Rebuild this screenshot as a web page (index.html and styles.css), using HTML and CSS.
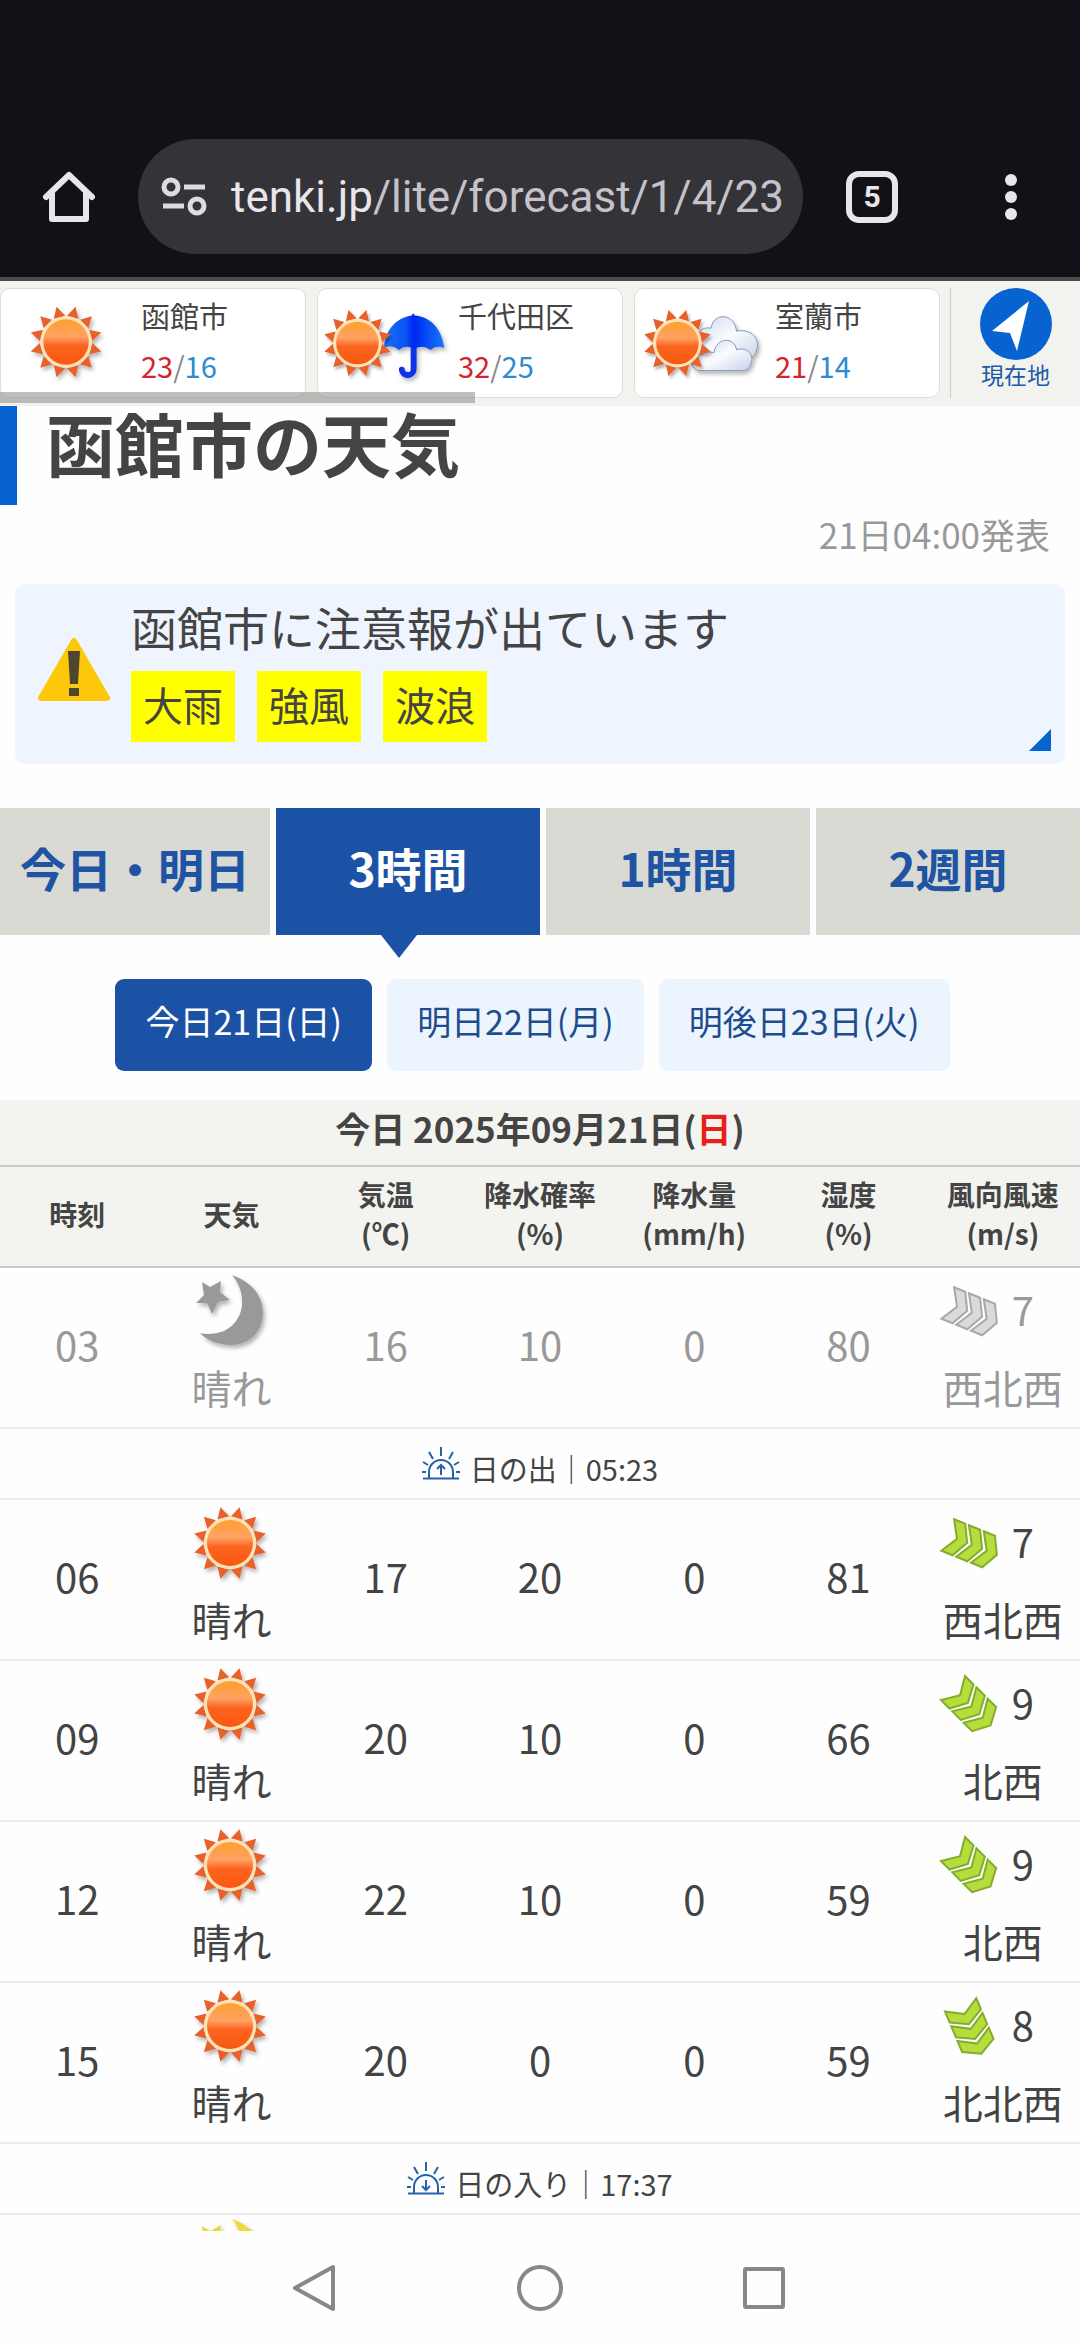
FILE: index.html
```html
<!DOCTYPE html>
<html lang="ja">
<head>
<meta charset="utf-8">
<meta name="viewport" content="width=device-width, initial-scale=1">
<title>函館市の天気</title>
<link rel="stylesheet" href="styles.css">
</head>
<body>
<!-- Shared icon shapes -->
<svg class="defs" width="0" height="0" aria-hidden="true">
  <defs>
    <linearGradient id="sun-fill" x1="0" y1="0" x2="0" y2="1">
      <stop offset="0" stop-color="#ff9f2e"/><stop offset=".38" stop-color="#ffa263"/>
      <stop offset=".58" stop-color="#fb6420"/><stop offset="1" stop-color="#fb5710"/>
    </linearGradient>
    <linearGradient id="umbrella-fill" x1="0" y1="0" x2="1" y2="0">
      <stop offset="0" stop-color="#1d6df5"/><stop offset=".35" stop-color="#0a55f5"/><stop offset=".5" stop-color="#0326f0"/>
      <stop offset=".68" stop-color="#0648f5"/><stop offset="1" stop-color="#1a76f5"/>
    </linearGradient>
    <linearGradient id="cloud-fill" x1="0" y1="0" x2="1" y2="1">
      <stop offset="0" stop-color="#c9d7ee"/><stop offset=".5" stop-color="#fafcff"/><stop offset="1" stop-color="#c5d2ea"/>
    </linearGradient>
    <filter id="soft-shadow" x="-20%" y="-20%" width="150%" height="150%">
      <feDropShadow dx="2" dy="3" stdDeviation="2" flood-color="#000" flood-opacity=".3"/>
    </filter>
    <path id="ray" d="M-6 -26 L0 -37 L6 -26Z"/>
    <g id="sun" filter="url(#soft-shadow)">
      <g fill="#e8602c">
        <use href="#ray" transform="rotate(15)"/><use href="#ray" transform="rotate(45)"/>
        <use href="#ray" transform="rotate(75)"/><use href="#ray" transform="rotate(105)"/>
        <use href="#ray" transform="rotate(135)"/><use href="#ray" transform="rotate(165)"/>
        <use href="#ray" transform="rotate(195)"/><use href="#ray" transform="rotate(225)"/>
        <use href="#ray" transform="rotate(255)"/><use href="#ray" transform="rotate(285)"/>
        <use href="#ray" transform="rotate(315)"/><use href="#ray" transform="rotate(345)"/>
      </g>
      <circle r="26" fill="#fde3b4"/>
      <circle r="23" fill="url(#sun-fill)"/>
    </g>
    <g id="moon" filter="url(#soft-shadow)">
      <path d="M39 4 C59 11 70 25 70 42 C70 60 57 74 38 74 C25 74 13 69 7 62 C14 64 23 63 31 60 C44 54 50 41 49 29 C49 20 45 11 39 4Z"/>
      <path d="M9 11 L17 16 L28 10 L27 21 L37 29 L25 31 L19 43 L14 32 L3 32 L11 24Z"/>
    </g>
    <path id="chevron" d="M-24 -17 H-12 L-3 0 L-12 17 H-24 L-14 0Z"/>
    <g id="wind">
      <use href="#chevron"/><use href="#chevron" x="16"/><use href="#chevron" x="32"/>
    </g>
    <g id="horizon">
      <path d="M1 31.500H37M7 31V25a12 12 0 0 1 24 0V31M19 0V9M7 5L11 12M31 5L27 12M1 15L6 18M37 15L32 18M0 25H4M38 25H34"/>
    </g>
  </defs>
</svg>

<div class="screen">
  <header class="browser-bar">
    <button class="bar-button" type="button" aria-label="ホーム">
      <svg width="54" height="56" viewBox="0 0 54 56" fill="none" stroke="#e8e5ec" stroke-width="6" stroke-linecap="round" stroke-linejoin="round"><path d="M4 28L27 6L50 28M10 24V50H44V24"/></svg>
    </button>
    <button class="address" type="button">
      <svg width="44" height="38" viewBox="0 0 44 38" fill="none" stroke="#dedbe2" stroke-width="5"><circle cx="9" cy="9" r="7"/><path d="M22 9H43M1 28H22"/><circle cx="35" cy="28" r="7"/></svg>
      <span class="url">tenki.jp<span class="url-path">/lite/forecast/1/4/23</span></span>
    </button>
    <button class="bar-button" type="button" aria-label="タブ"><span class="tab-count">5</span></button>
    <button class="bar-button" type="button" aria-label="メニュー">
      <svg width="12" height="46" viewBox="0 0 12 46" fill="#e8e5ec"><circle cx="6" cy="6" r="6"/><circle cx="6" cy="23" r="6"/><circle cx="6" cy="40" r="6"/></svg>
    </button>
  </header>

  <main class="page">
    <nav class="places">
      <div class="place-list">
        <a class="place" href="#">
          <svg class="place-icon" viewBox="0 0 142 84"><use href="#sun" x="66" y="41"/></svg>
          <span class="place-text"><span>函館市</span><span class="temps"><span class="high">23</span>/<span class="low">16</span></span></span>
        </a>
        <a class="place" href="#">
          <svg class="place-icon" viewBox="0 0 142 84">
            <g filter="url(#soft-shadow)">
              <path d="M97 42V68a6 6 0 0 1-12 1" fill="none" stroke="#0a30e8" stroke-width="6" stroke-linecap="round"/>
              <path d="M95 14q2-4 3 0C114 15 126 28 128 47Q120 44 114 49Q106 43 98 48Q89 43 82 49Q75 43 67 47C68 28 80 16 95 14Z" fill="url(#umbrella-fill)"/>
            </g>
            <use href="#sun" transform="translate(40 42) scale(.94)"/>
          </svg>
          <span class="place-text"><span>千代田区</span><span class="temps"><span class="high">32</span>/<span class="low">25</span></span></span>
        </a>
        <a class="place" href="#">
          <svg class="place-icon" viewBox="0 0 142 84">
            <g filter="url(#soft-shadow)" fill="url(#cloud-fill)" stroke="#8794ad" stroke-width="1">
              <path d="M64 56C56 40 64 24 77 27C80 10 101 12 103 30C118 27 128 38 123 50C121 57 116 59 112 59H70Z"/>
              <path d="M66 70C54 69 56 52 68 54C72 50 76 51 80 52C83 35 101 36 103 49C114 45 122 55 117 64C115 69 112 70 108 70Z"/>
            </g>
            <use href="#sun" transform="translate(43 42) scale(.94)"/>
          </svg>
          <span class="place-text"><span>室蘭市</span><span class="temps"><span class="high">21</span>/<span class="low">14</span></span></span>
        </a>
      </div>
      <a class="locate" href="#">
        <svg width="72" height="72" viewBox="0 0 72 72"><circle cx="36" cy="36" r="36" fill="#0763cf"/><path d="M49 13L37 63L30 45L12 43Z" fill="#fff"/></svg>
        <span>現在地</span>
      </a>
      <div class="scroll-thumb"></div>
    </nav>

    <h1 class="title">函館市の天気</h1>
    <p class="issued">21日04:00発表</p>

    <a class="alert" href="#">
      <svg width="74" height="64" viewBox="0 0 74 64"><path d="M37 3L70 60H4Z" fill="#fdc70a" stroke="#fdc70a" stroke-width="6" stroke-linejoin="round"/><path d="M31 13H43L41 46H33ZM32 50H42V58H32Z" fill="#4f4630"/></svg>
      <span class="alert-body">
        <span class="alert-text">函館市に注意報が出ています</span>
        <span class="tags"><span class="tag">大雨</span><span class="tag">強風</span><span class="tag">波浪</span></span>
      </span>
    </a>

    <nav class="tabs">
      <a href="#">今日・明日</a>
      <a href="#" class="current" aria-current="page">3時間</a>
      <a href="#">1時間</a>
      <a href="#">2週間</a>
    </nav>

    <nav class="days">
      <a href="#" class="current" aria-current="page">今日21日(日)</a>
      <a href="#">明日22日(月)</a>
      <a href="#">明後日23日(火)</a>
    </nav>

    <table class="forecast">
      <thead>
        <tr class="date"><th colspan="7">今日 2025年09月21日(<span class="sunday">日</span>)</th></tr>
        <tr class="labels">
          <th>時刻</th><th>天気</th><th>気温<br>(℃)</th><th>降水確率<br>(%)</th><th>降水量<br>(mm/h)</th><th>湿度<br>(%)</th><th>風向風速<br>(m/s)</th>
        </tr>
      </thead>
      <tbody>
        <tr class="hour past">
          <td>03</td>
          <td><svg class="weather" viewBox="0 0 76 76" fill="#999"><use href="#moon"/></svg><span class="name">晴れ</span></td>
          <td>16</td><td>10</td><td>0</td><td>80</td>
          <td><span class="wind"><svg viewBox="-34 -32 68 64"><use href="#wind" transform="rotate(22)"/></svg>7</span><span class="name">西北西</span></td>
        </tr>
        <tr class="horizon"><td colspan="7"><span class="horizon-line"><svg viewBox="0 0 38 33"><use href="#horizon"/><path d="M19 28V18M15 22L19 18L23 22"/></svg><span>日の出｜05:23</span></span></td></tr>
        <tr class="hour">
          <td>06</td>
          <td><svg class="weather" viewBox="-37 -40 76 76"><use href="#sun"/></svg><span class="name">晴れ</span></td>
          <td>17</td><td>20</td><td>0</td><td>81</td>
          <td><span class="wind"><svg viewBox="-34 -32 68 64"><use href="#wind" transform="rotate(22)"/></svg>7</span><span class="name">西北西</span></td>
        </tr>
        <tr class="hour">
          <td>09</td>
          <td><svg class="weather" viewBox="-37 -40 76 76"><use href="#sun"/></svg><span class="name">晴れ</span></td>
          <td>20</td><td>10</td><td>0</td><td>66</td>
          <td><span class="wind"><svg viewBox="-34 -32 68 64"><use href="#wind" transform="rotate(45)"/></svg>9</span><span class="name">北西</span></td>
        </tr>
        <tr class="hour">
          <td>12</td>
          <td><svg class="weather" viewBox="-37 -40 76 76"><use href="#sun"/></svg><span class="name">晴れ</span></td>
          <td>22</td><td>10</td><td>0</td><td>59</td>
          <td><span class="wind"><svg viewBox="-34 -32 68 64"><use href="#wind" transform="rotate(45)"/></svg>9</span><span class="name">北西</span></td>
        </tr>
        <tr class="hour">
          <td>15</td>
          <td><svg class="weather" viewBox="-37 -40 76 76"><use href="#sun"/></svg><span class="name">晴れ</span></td>
          <td>20</td><td>0</td><td>0</td><td>59</td>
          <td><span class="wind"><svg viewBox="-34 -32 68 64"><use href="#wind" transform="rotate(67)"/></svg>8</span><span class="name">北北西</span></td>
        </tr>
        <tr class="horizon"><td colspan="7"><span class="horizon-line"><svg viewBox="0 0 38 33"><use href="#horizon"/><path d="M19 18V28M15 24L19 28L23 24"/></svg><span>日の入り｜17:37</span></span></td></tr>
        <tr class="hour next">
          <td></td>
          <td><svg class="weather" viewBox="0 0 76 76" fill="#ecd93c"><use href="#moon"/></svg></td>
          <td></td><td></td><td></td><td></td><td></td>
        </tr>
      </tbody>
    </table>
  </main>

  <footer class="system-nav">
    <button type="button" aria-label="戻る"><svg viewBox="0 0 50 50"><path d="M43 4V46L5 25Z"/></svg></button>
    <button type="button" aria-label="ホーム画面"><svg viewBox="0 0 50 50"><circle cx="25" cy="25" r="21"/></svg></button>
    <button type="button" aria-label="最近のアプリ"><svg viewBox="0 0 50 50"><rect x="5" y="6" width="38" height="38" rx="1"/></svg></button>
  </footer>
</div>
</body>
</html>
```
FILE: styles.css
```css
* { box-sizing: border-box; }

body {
  margin: 0;
  background: #fefefe;
  color: #444;
  font-family: "Noto Sans CJK JP", sans-serif;
}

a { color: inherit; text-decoration: none; }
button { border: 0; padding: 0; background: none; color: inherit; font: inherit; }
svg { display: block; flex: none; overflow: visible; }
.defs { position: absolute; }

.screen { display: flex; flex-direction: column; height: 100vh; }

/* Browser toolbar */
.browser-bar {
  display: grid;
  grid-template-columns: 138px 1fr 138px 139px;
  flex: none;
  padding: 139px 0 23px;
  background: #121118;
  border-bottom: 4px solid #4b4b4e;
}
.bar-button { display: flex; align-items: center; justify-content: center; }
.address {
  display: flex;
  align-items: center;
  gap: 25px;
  min-width: 0;
  height: 115px;
  padding: 0 24px;
  border-radius: 58px;
  background: #343338;
}
.url {
  color: #e8e5ec;
  font-family: Roboto, sans-serif;
  font-size: 44px;
  line-height: 60px;
  white-space: nowrap;
}
.url-path { color: #c5c2ca; }
.tab-count {
  width: 52px;
  height: 52px;
  border: 6px solid #e8e5ec;
  border-radius: 13px;
  color: #e8e5ec;
  font: 700 30px/40px Roboto, sans-serif;
  text-align: center;
}

.page { flex: 1; min-height: 0; overflow: hidden; }

/* Saved places */
.places { position: relative; display: flex; padding: 7px 0 8px; background: #f2f3ee; }
.place-list { display: flex; flex: 1; gap: 11px; padding-right: 10px; }
.place {
  display: flex;
  align-items: center;
  flex: 1;
  min-width: 0;
  height: 110px;
  border: 1px solid #dcdcda;
  border-radius: 10px;
  background: #fff;
}
.place-icon { width: 140px; height: 84px; }
.place-text { display: flex; flex-direction: column; font-size: 29px; line-height: 50px; padding-bottom: 7px; }
.temps { color: #888; }
.high { color: #d3252b; }
.low { color: #2e8bd0; }
.locate {
  display: flex;
  flex-direction: column;
  align-items: center;
  width: 130px;
  border-left: 1px solid #ccc;
  color: #1b5aa6;
  font-size: 23px;
  line-height: 28px;
}
.scroll-thumb {
  position: absolute;
  left: 0;
  bottom: 3px;
  width: 44%;
  height: 11px;
  background: rgba(128, 128, 128, .5);
}

/* Heading */
.title {
  margin: 0;
  padding: 0 0 27px 29px;
  border-left: 17px solid #0763cf;
  font-size: 69px;
  line-height: 72px;
}
.issued { margin: 0 30px 22px; color: #999; font-size: 35px; line-height: 57px; text-align: right; }

/* Warning panel */
.alert {
  position: relative;
  display: flex;
  align-items: center;
  gap: 20px;
  margin: 0 15px 44px;
  padding: 14px 22px 22px;
  border-radius: 10px;
  background: #eef5fe;
}
.alert::after {
  content: "";
  position: absolute;
  right: 14px;
  bottom: 13px;
  border: 11px solid #0763cf;
  border-top-color: transparent;
  border-left-color: transparent;
}
.alert-body { display: flex; flex-direction: column; gap: 17px; }
.alert-text { font-size: 46px; line-height: 56px; }
.tags { display: flex; gap: 22px; }
.tag { padding: 0 12px 4px; background: #ff0; font-size: 40px; line-height: 67px; }

/* Period tabs */
.tabs { display: grid; grid-template-columns: repeat(4, 1fr); margin-bottom: 44px; }
.tabs a {
  position: relative;
  padding-bottom: 8px;
  background: #d9dad4;
  color: #1f53a3;
  font-size: 46px;
  font-weight: 700;
  line-height: 119px;
  text-align: center;
}
.tabs a + a { border-left: 6px solid #fefefe; }
.tabs .current { background: #1c52a6; color: #fff; }
.tabs .current::after {
  content: "";
  position: absolute;
  top: 100%;
  left: 105px;
  border: 18px solid transparent;
  border-top: 23px solid #1c52a6;
  border-bottom: 0;
}

/* Day buttons */
.days { display: flex; justify-content: center; gap: 15px; margin: 0 15px 29px 0; }
.days a {
  padding: 0 30px 8px;
  border-radius: 9px;
  background: #ecf5fe;
  color: #1f4c8c;
  font-size: 34px;
  line-height: 84px;
}
.days .current { background: #1c52a6; color: #fff; }

/* Forecast table */
.forecast { width: 100%; table-layout: fixed; border-spacing: 0; text-align: center; }
.forecast th, .forecast td { padding: 0; }
.forecast th { background: #f3f4ef; border-bottom: 2px solid #c9cac6; }
.date th { padding-bottom: 10px; font-size: 35px; line-height: 55px; }
.date .sunday { color: #e8201c; }
.labels th { height: 101px; padding-bottom: 5px; font-size: 28px; line-height: 39px; white-space: nowrap; }
.forecast td { border-bottom: 2px solid #ececec; }
.forecast .hour td { height: 161px; padding: 3px 0 10px; font-size: 40px; line-height: 60px; }
.forecast .next td { vertical-align: top; padding-top: 0; }
.hour .weather { width: 76px; height: 76px; margin: 0 auto 10px; }
.name { display: block; font-size: 40px; line-height: 60px; white-space: nowrap; }
.past td { color: #999; }
.wind {
  display: flex;
  align-items: center;
  gap: 8px;
  height: 76px;
  margin-bottom: 10px;
  padding-left: 10px;
}
.wind svg { width: 68px; height: 64px; margin-top: 6px; fill: #b5dd3c; stroke: #86ac2c; stroke-width: 2px; }
.past .wind svg { fill: #dadada; stroke: #a9a9a9; }
.horizon-line { display: flex; align-items: center; justify-content: center; gap: 10px; height: 69px; }
.horizon-line span { padding-top: 8px; font-size: 29px; line-height: 40px; }
.horizon-line svg { width: 38px; height: 33px; fill: none; stroke: #2762a8; stroke-width: 2px; }

/* System navigation */
.system-nav {
  display: grid;
  grid-template-columns: repeat(3, 225px);
  justify-content: center;
  flex: none;
  height: 113px;
  background: #fefefe;
}
.system-nav button { display: grid; place-items: center; }
.system-nav svg { width: 50px; height: 50px; fill: none; stroke: #888; stroke-width: 4px; stroke-linejoin: round; }
```
